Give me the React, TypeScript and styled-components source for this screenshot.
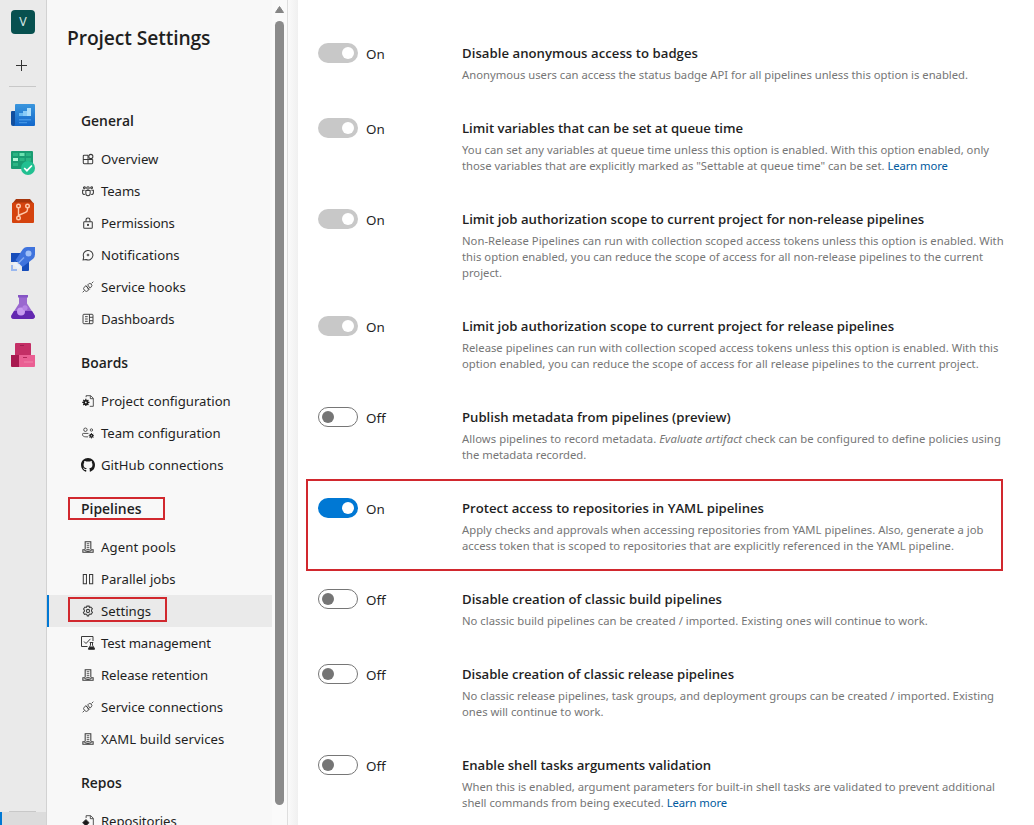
import React from 'react';
import styled, { createGlobalStyle, css } from 'styled-components';

const regular = '"Segoe UI", "Noto Sans", sans-serif';
const semibold = '"Segoe UI", "Open Sans", sans-serif';

const GlobalStyle = createGlobalStyle`
  *, *::before, *::after { box-sizing: border-box; }
  body { margin: 0; background: #fff; color: #1f1f1f; font-family: ${regular}; }
`;

const Page = styled.div`
  display: flex;
  height: 825px;
  overflow: hidden;
`;

/* ---------- product rail ---------- */

const Rail = styled.nav`
  flex: none;
  width: 47px;
  display: flex;
  flex-direction: column;
  background: #eaeaea;
  border-right: 1px solid #d2d2d2;
  padding-top: 10px;
`;

const Avatar = styled.div`
  width: 24px;
  height: 24px;
  margin-left: 11px;
  border-radius: 4px;
  background: #07504f;
  color: #d5e6e5;
  font-size: 12.5px;
  line-height: 24px;
  text-align: center;
`;

const AddButton = styled.div`
  height: 52px;
  padding: 26px 0 0 16px;
  line-height: 0;
`;

const Divider = styled.div`
  flex: none;
  width: 27px;
  height: 1px;
  margin-left: 9px;
  background: #c8c8c8;
`;

const Services = styled.div`
  flex: 1;
  display: flex;
  flex-direction: column;
  gap: 24px;
  padding: 16px 0 0 11px;

  svg { display: block; }
`;

const RailFooter = styled.div`
  flex: none;
  height: 13px;
  border-left: 2px solid #0078d4;
  background: #dcdcdc;
`;

/* ---------- settings navigation ---------- */

const Sidebar = styled.aside`
  flex: none;
  width: 225px;
  background: #f8f8f8;
  overflow: hidden;
`;

const SidebarTitle = styled.h1`
  margin: 0;
  height: 93px;
  padding: 24px 0 0 20px;
  font: 600 19.3px/28px ${semibold};
  letter-spacing: -0.12px;
`;

const GroupTitle = styled.h2`
  margin: 0;
  height: 50px;
  padding: 18px 0 0 34px;
  font: 600 13.9px/20px ${semibold};
`;

const Marked = styled.span<{ $w: number; $h: number; $x: number; $y: number }>`
  position: relative;

  &::after {
    content: '';
    position: absolute;
    left: ${p => p.$x}px;
    top: ${p => p.$y}px;
    width: ${p => p.$w}px;
    height: ${p => p.$h}px;
    border: 2px solid #d1282e;
  }
`;

const NavItem = styled.a<{ $active?: boolean }>`
  display: flex;
  align-items: center;
  gap: 6px;
  height: 32px;
  padding-left: 34px;
  font-size: 13.16px;
  line-height: 20px;
  white-space: nowrap;
  ${p => p.$active && css`
    background: #eaeaea;
    border-left: 2px solid #0078d4;
    padding-left: 32px;
  `}

  svg { flex: none; display: block; }
`;

const Label = styled.span<{ $track?: number }>`
  letter-spacing: ${p => p.$track ?? 0}px;
`;

const ScrollTrack = styled.div`
  flex: none;
  width: 15px;
  display: flex;
  flex-direction: column;
  align-items: center;
  background: #fafafa;
  padding: 6px 0 0 0;
`;

const ScrollThumb = styled.div`
  width: 9px;
  height: 784px;
  margin-top: 7px;
  border-radius: 5px;
  background: #8b8b8b;
`;

const Gutter = styled.div`
  flex: none;
  width: 11px;
  border-left: 1px solid #dedede;
  background: linear-gradient(to right, #fafafa, #f0f0f0);
`;

/* ---------- options ---------- */

const Content = styled.main`
  flex: 1;
  padding: 43px 0 0 20px;
`;

const Option = styled.section`
  position: relative;
  display: grid;
  grid-template-columns: 48px 96px 1fr;
  padding-bottom: 35px;
`;

const Highlight = styled.div`
  position: absolute;
  left: -12px;
  top: -19px;
  width: 697px;
  height: 92px;
  border: 2px solid #d1282e;
`;

type State = 'locked' | 'on' | 'off';

const Toggle = styled.div<{ $state: State }>`
  display: flex;
  align-items: center;
  justify-content: ${p => (p.$state === 'off' ? 'flex-start' : 'flex-end')};
  width: 40px;
  height: 20px;
  padding: 0 ${p => (p.$state === 'off' ? 3 : 4)}px;
  border-radius: 10px;
  border: ${p => (p.$state === 'off' ? '1px solid #767676' : 'none')};
  background: ${p => ({ locked: '#c8c8c8', on: '#0078d4', off: '#fff' })[p.$state]};

  &::before {
    content: '';
    width: 12px;
    height: 12px;
    border-radius: 50%;
    background: ${p => (p.$state === 'off' ? '#757575' : '#fff')};
  }
`;

const ToggleText = styled.span`
  font-size: 13.4px;
  line-height: 22px;
`;

const OptionTitle = styled.h3<{ $track: number }>`
  margin: 0 0 4px;
  font: 600 13.16px/20px ${semibold};
  letter-spacing: ${p => p.$track}px;
  white-space: nowrap;
`;

const Line = styled.div<{ $track: number }>`
  height: 16px;
  font-size: 11.28px;
  line-height: 16px;
  letter-spacing: ${p => p.$track}px;
  color: #767676;
  white-space: nowrap;
`;

const Link = styled.a`
  color: #005a9e;
  letter-spacing: -0.1px;
`;

/* ---------- drawings ---------- */

const BoardsIcon = () => (
  <svg width="24" height="24" viewBox="0 0 24 24">
    <defs>
      <linearGradient id="ov" x1="0" y1="0" x2="0" y2="1">
        <stop offset="0" stopColor="#3a96dd" />
        <stop offset="1" stopColor="#1267cb" />
      </linearGradient>
    </defs>
    <path d="M0 9a1 1 0 0 1 1-1h4v15H2a2 2 0 0 1-2-2z" fill="#114f9f" />
    <path d="M4 2a1 1 0 0 1 1-1h18a1 1 0 0 1 1 1v20a1 1 0 0 1-1 1H2a2 2 0 0 0 2-2z" fill="url(#ov)" />
    <path d="M8 10h4v3H8z" fill="#6cbcf3" />
    <path d="M12 8h4v5h-4z" fill="#8accf7" />
    <path d="M16 5h4v8h-4z" fill="#addef9" />
    <path d="M8 16h12v1.600H8zM8 19h8v1.200H8z" fill="#3f93e4" />
  </svg>
);

const WorkIcon = () => (
  <svg width="24" height="24" viewBox="0 0 24 24">
    <path d="M0 1a1 1 0 0 1 1-1h20a1 1 0 0 1 1 1v16a1 1 0 0 1-1 1H1a1 1 0 0 1-1-1z" fill="#1a9c72" />
    <path d="M2 2h5v3H2zM15 2h5v3h-5zM8.500 7h5v3h-5zM15 7h5v3h-5zM2 12h5v3H2z" fill="#2bb583" />
    <path d="M8.500 2h5v3h-5z" fill="#6be2b0" />
    <path d="M2 7h5v3H2z" fill="#b3f6d8" />
    <circle cx="17" cy="17" r="7" fill="#22c091" />
    <path d="M13.200 17l2.700 2.700 5-5.200" fill="none" stroke="#fff" strokeWidth="1.700" />
  </svg>
);

const ReposIcon = () => (
  <svg width="24" height="24" viewBox="0 0 24 24">
    <path d="M5 0h14l4 5H1z" fill="#a6350b" />
    <path d="M1 5a1.500 1.500 0 0 1 1.500-1.500h19A1.500 1.500 0 0 1 23 5v18a1 1 0 0 1-1 1H2a1 1 0 0 1-1-1z" fill="#d5430e" />
    <g fill="none" stroke="#ffc9ab" strokeWidth="1.400">
      <circle cx="7.500" cy="7" r="1.800" />
      <circle cx="16.500" cy="7" r="1.800" />
      <circle cx="7.500" cy="19" r="1.800" />
      <path d="M7.500 9v8M16.500 9v1.500c0 1.500-.7 2.200-2 2.800l-5 2.200c-1.400.6-2 1-2 2.200" />
    </g>
  </svg>
);

const RocketIcon = () => (
  <svg width="24" height="24" viewBox="0 0 24 24">
    <path d="M0 6h9l9 9v8a1 1 0 0 1-1 1h-6v-7l-4-4H0z" fill="#174dba" />
    <path d="M0 6h7v9H0z" fill="#174dba" />
    <path d="M16 0h8v7.500a6 6 0 0 1-1.800 4.200L11.500 20 4.500 13 12 2a6 6 0 0 1 4-2z" fill="#3f73dd" />
    <circle cx="17.500" cy="6.500" r="3" fill="#9fc0f8" />
    <path d="M7 16.500l6-6" stroke="#86abf2" strokeWidth="1.400" />
    <path d="M4 14.500l5.500 5.500-2.500 2-5-5z" fill="#e8f0fd" />
    <path d="M0 18h2v4h4v2H0z" fill="#9ab8ef" />
  </svg>
);

const FlaskIcon = () => (
  <svg width="24" height="24" viewBox="0 0 24 24">
    <path d="M8 1.500v7L.5 20C-.6 22 .5 24 3 24h18c2.500 0 3.600-2 2.500-4L16 8.500v-7z" fill="#9a68cf" />
    <path d="M3 16h18l2.700 4.500C24.500 22.500 23 24 21 24H3c-2 0-3.500-1.500-2.500-3.500z" fill="#6328b0" />
    <path d="M7 0h10v2.500H7z" fill="#8555c4" />
    <circle cx="10" cy="16.500" r="4" fill="#c79bf0" />
    <circle cx="14" cy="12.800" r="2.600" fill="#b583e4" />
  </svg>
);

const ArtifactsIcon = () => (
  <svg width="24" height="24" viewBox="0 0 24 24">
    <path d="M4 1a1 1 0 0 1 1-1h14a1 1 0 0 1 1 1v11H4z" fill="#c42f66" />
    <path d="M0 12h8v12H1a1 1 0 0 1-1-1z" fill="#a8194f" />
    <path d="M8 12h16v11a1 1 0 0 1-1 1H8z" fill="#ea5f93" />
    <path d="M9 2h4v1H9z" fill="#9d1f4f" />
    <path d="M12 14h4v1h-4z" fill="#b3285b" />
    <path d="M13 19h9" stroke="#f184ab" strokeWidth="1" />
  </svg>
);

const Stroke = styled.svg`
  fill: none;
  stroke: #3a3a3a;
  stroke-width: 1;
`;

const glyphs: Record<string, React.ReactNode> = {
  overview: (
    <>
      <path d="M7 2.500H2.500a1 1 0 0 0-1 1v8a1 1 0 0 0 1 1h9a1 1 0 0 0 1-1v-4M1.500 7.500h11M7 2.500v10" strokeWidth="1.200" />
      <circle cx="10.300" cy="4" r="2.400" strokeWidth="1.200" />
    </>
  ),
  teams: (
    <g strokeWidth="1.200">
      <circle cx="2.800" cy="3.300" r="1.100" />
      <circle cx="7" cy="3.500" r="1.500" />
      <circle cx="11.200" cy="3.300" r="1.100" />
      <path d="M4.500 6.500h5v3.500a2.500 2.500 0 0 1-5 0zM3 6H.7v3c0 1.300.8 2.100 2.600 2.100M11 6h2.300v3c0 1.300-.8 2.100-2.600 2.100" />
    </g>
  ),
  lock: (
    <g strokeWidth="1.200">
      <rect x="2" y="5.500" width="10" height="7.500" rx=".8" />
      <path d="M4.700 5.300V3.500a2.300 2.300 0 0 1 4.600 0v1.800" />
      <circle cx="7" cy="9.200" r=".6" fill="#333" />
    </g>
  ),
  bell: (
    <>
      <path d="M1.300 12.800l.7-3.300A5.600 5.600 0 1 1 4.700 12.300z" strokeWidth="1.200" />
      <circle cx="7" cy="7" r="1.100" fill="#555" stroke="#555" />
    </>
  ),
  plug: (
    <path d="M.8 13.200l2-2M11.200 2.800l2-2M5.700 6.300a1.500 1.500 0 0 0-2.200 0l-.9.9a2.400 2.400 0 0 0 0 3.300l.9.900a2.400 2.400 0 0 0 3.300 0l.9-.9zM6.600 4.500l.9-.9a2.400 2.400 0 0 1 3.300 0 2.400 2.400 0 0 1 0 3.300l-1.400 1.400zM4.500 5.500l4.500 4.500" />
  ),
  board: (
    <g strokeWidth="1.100">
      <rect x="1.200" y="1.500" width="11.600" height="11" rx="1" />
      <path d="M8.700 1.500v11M3.500 4.300h3.200M3.500 7h3.200M3.500 9.700h3.200M8.700 5h4M8.700 9h4" />
    </g>
  ),
  project: (
    <>
      <path d="M4.800 2.500V.8h5.400l3 3v9.400H9M9.700 1v3.300h3.300" />
      <path d="M4.500 4.500v8.400M.3 8.700h8.400M1.500 5.700l6 6M7.500 5.700l-6 6" strokeWidth="1.500" stroke="#1b1b1b" />
      <circle cx="4.500" cy="8.700" r="2" strokeWidth="2" stroke="#1b1b1b" fill="#f8f8f8" />
    </>
  ),
  team: (
    <>
      <circle cx="4" cy="3.200" r="2" />
      <circle cx="11" cy="3.500" r="1.400" />
      <path d="M7.500 7.500H1.500a1 1 0 0 0-1 1c0 1.900 1.500 3 4 3H7" />
      <path d="M11 7v6.400M7.800 10.200h6.400M8.800 8l4.400 4.400M13.200 8l-4.400 4.400" stroke="#222" />
      <circle cx="11" cy="10.200" r="1.500" strokeWidth="1.600" stroke="#222" fill="#f8f8f8" />
    </>
  ),
  server: (
    <>
      <path d="M3.700 9.800V.8h6.600v9M1 13V10.300h1.700c.5 1.200 1.500 1.600 4.300 1.600s3.800-.4 4.300-1.600H13V13z" strokeWidth="1.200" />
      <path d="M5.500 3.200h3M5.500 5.500h3M5.500 7.800h3M5 10h4" />
    </>
  ),
  parallel: <path d="M1.500 1.700h3.700v10.800H1.500zM8.800 1.700h3.700v10.800H8.800z" strokeWidth="1.200" />,
  gear: (
    <>
      <path d="M5.700 1.300h2.600l.4 1.600 1.600-.5 1.800 2-1 1.500.1 1.400 1 1.200-1.400 2.300-1.800-.3-.8.700-.5 1.500H6.200l-.6-1.500-1-.6-1.700.3L1.600 8.700l1.200-1.300V6.100l-1-1.400 1.600-2.300 1.700.5z" strokeWidth="1.200" />
      <circle cx="7" cy="7" r="1.900" strokeWidth="1.200" />
    </>
  ),
  repo: (
    <>
      <path d="M4.800 3.500V.8h5.400l3 3v9.400H9M9.700 1v3.300h3.300" />
      <path d="M4.500 5.200l3.800 3.800-3.800 3.800L.7 9z" fill="#1b1b1b" />
    </>
  ),
};

const GlyphBox = styled.span`
  flex: none;
  width: 14px;
  display: flex;
  justify-content: center;
`;

const Glyph = ({ name }: { name: string }) => {
  if (name === 'github') {
    return (
      <svg width="14" height="14" viewBox="0 0 16 16" fill="#1b1b1b">
        <path d="M8 0C3.580 0 0 3.580 0 8c0 3.540 2.290 6.530 5.470 7.590.4.070.55-.17.55-.38 0-.19-.01-.82-.01-1.490-2.010.37-2.530-.49-2.690-.94-.09-.23-.48-.94-.82-1.130-.28-.15-.68-.52-.01-.53.63-.01 1.080.58 1.230.82.72 1.210 1.870.87 2.330.66.07-.52.28-.87.51-1.070-1.780-.2-3.640-.89-3.640-3.950 0-.87.31-1.590.82-2.150-.08-.2-.36-1.020.08-2.120 0 0 .67-.21 2.200.82.64-.18 1.320-.27 2-.27s1.360.09 2 .27c1.530-1.040 2.200-.82 2.200-.82.44 1.100.16 1.920.08 2.120.51.56.82 1.270.82 2.150 0 3.070-1.870 3.750-3.650 3.950.29.25.54.73.54 1.480 0 1.070-.01 1.930-.01 2.200 0 .21.15.46.55.38A8.010 8.010 0 0 0 16 8c0-4.420-3.580-8-8-8z" />
      </svg>
    );
  }
  if (name === 'test') {
    return (
      <Stroke width="14" height="14" viewBox="0 0 14 14">
        <path d="M6.500 10.500H.5V.5h11.500V5M3 5.500l2 2 4.500-4.700" />
        <path d="M8.700 6.500h3.600M9.500 6.500v2.700l-2 3.800h6l-2-3.800V6.500" />
        <path d="M8.500 11h4l1 2.200h-6z" fill="#1b1b1b" />
      </Stroke>
    );
  }
  return (
    <GlyphBox>
      <Stroke width="12" height="12" viewBox="0 0 14 14">{glyphs[name]}</Stroke>
    </GlyphBox>
  );
};

/* ---------- data ---------- */

const groups: { title: string; items: [string, string, number][] }[] = [
  {
    title: 'General',
    items: [
      ['overview', 'Overview', 0],
      ['teams', 'Teams', -0.1],
      ['lock', 'Permissions', -0.1],
      ['bell', 'Notifications', 0.03],
      ['plug', 'Service hooks', 0.02],
      ['board', 'Dashboards', -0.1],
    ],
  },
  {
    title: 'Boards',
    items: [
      ['project', 'Project configuration', 0],
      ['team', 'Team configuration', -0.04],
      ['github', 'GitHub connections', 0.03],
    ],
  },
  {
    title: 'Pipelines',
    items: [
      ['server', 'Agent pools', 0.1],
      ['parallel', 'Parallel jobs', 0],
      ['gear', 'Settings', 0],
      ['test', 'Test management', -0.12],
      ['server', 'Release retention', -0.06],
      ['plug', 'Service connections', 0],
      ['server', 'XAML build services', 0.07],
    ],
  },
  { title: 'Repos', items: [['repo', 'Repositories', -0.08]] },
];

type OptionData = {
  state: State;
  title: string;
  track: number;
  lines: [React.ReactNode, number][];
  marked?: boolean;
};

const options: OptionData[] = [
  {
    state: 'locked',
    title: 'Disable anonymous access to badges',
    track: 0.034,
    lines: [['Anonymous users can access the status badge API for all pipelines unless this option is enabled.', -0.01]],
  },
  {
    state: 'locked',
    title: 'Limit variables that can be set at queue time',
    track: -0.04,
    lines: [
      ['You can set any variables at queue time unless this option is enabled. With this option enabled, only', 0.005],
      [<>those variables that are explicitly marked as "Settable at queue time" can be set. <Link>Learn more</Link></>, -0.005],
    ],
  },
  {
    state: 'locked',
    title: 'Limit job authorization scope to current project for non-release pipelines',
    track: 0,
    lines: [
      ['Non-Release Pipelines can run with collection scoped access tokens unless this option is enabled. With', 0.018],
      ['this option enabled, you can reduce the scope of access for all non-release pipelines to the current', 0.02],
      ['project.', 0],
    ],
  },
  {
    state: 'locked',
    title: 'Limit job authorization scope to current project for release pipelines',
    track: -0.016,
    lines: [
      ['Release pipelines can run with collection scoped access tokens unless this option is enabled. With this', 0.002],
      ['option enabled, you can reduce the scope of access for all release pipelines to the current project.', 0.014],
    ],
  },
  {
    state: 'off',
    title: 'Publish metadata from pipelines (preview)',
    track: -0.01,
    lines: [
      [<>Allows pipelines to record metadata. <em>Evaluate artifact</em> check can be configured to define policies using</>, 0.053],
      ['the metadata recorded.', -0.03],
    ],
  },
  {
    state: 'on',
    title: 'Protect access to repositories in YAML pipelines',
    track: -0.007,
    marked: true,
    lines: [
      ['Apply checks and approvals when accessing repositories from YAML pipelines. Also, generate a job', 0.018],
      ['access token that is scoped to repositories that are explicitly referenced in the YAML pipeline.', 0.018],
    ],
  },
  {
    state: 'off',
    title: 'Disable creation of classic build pipelines',
    track: 0.01,
    lines: [['No classic build pipelines can be created / imported. Existing ones will continue to work.', 0.022]],
  },
  {
    state: 'off',
    title: 'Disable creation of classic release pipelines',
    track: -0.036,
    lines: [
      ['No classic release pipelines, task groups, and deployment groups can be created / imported. Existing', 0.002],
      ['ones will continue to work.', 0],
    ],
  },
  {
    state: 'off',
    title: 'Enable shell tasks arguments validation',
    track: -0.062,
    lines: [
      ['When this is enabled, argument parameters for built-in shell tasks are validated to prevent additional', -0.006],
      [<>shell commands from being executed. <Link>Learn more</Link></>, 0],
    ],
  },
];

export default function App() {
  return (
    <Page>
      <GlobalStyle />
      <Rail>
        <Avatar>V</Avatar>
        <AddButton>
          <svg width="11" height="11" viewBox="0 0 11 11">
            <path d="M5.500 0v11M0 5.500h11" stroke="#333" strokeWidth="1" />
          </svg>
        </AddButton>
        <Divider />
        <Services>
          <BoardsIcon />
          <WorkIcon />
          <ReposIcon />
          <RocketIcon />
          <FlaskIcon />
          <ArtifactsIcon />
        </Services>
        <Divider />
        <RailFooter />
      </Rail>
      <Sidebar>
        <SidebarTitle>Project Settings</SidebarTitle>
        {groups.map(g => (
          <React.Fragment key={g.title}>
            <GroupTitle>
              {g.title === 'Pipelines' ? (
                <Marked $x={-13} $y={-2} $w={97} $h={23}>{g.title}</Marked>
              ) : (
                g.title
              )}
            </GroupTitle>
            {g.items.map(([icon, text, track]) => (
              <NavItem key={text} $active={text === 'Settings'}>
                <Glyph name={icon} />
                {text === 'Settings' ? (
                  <Marked $x={-33} $y={-4} $w={99} $h={25}>{text}</Marked>
                ) : (
                  <Label $track={track}>{text}</Label>
                )}
              </NavItem>
            ))}
          </React.Fragment>
        ))}
      </Sidebar>
      <ScrollTrack>
        <svg width="9" height="8" viewBox="0 0 9 8">
          <path d="M4.500.5L8.500 6.500H.5z" fill="#858585" stroke="#858585" strokeLinejoin="round" />
        </svg>
        <ScrollThumb />
      </ScrollTrack>
      <Gutter />
      <Content>
        {options.map(o => (
          <Option key={o.title}>
            <Toggle $state={o.state} />
            <ToggleText>{o.state === 'off' ? 'Off' : 'On'}</ToggleText>
            <div>
              <OptionTitle $track={o.track}>{o.title}</OptionTitle>
              {o.lines.map(([text, track], i) => (
                <Line key={i} $track={track}>{text}</Line>
              ))}
            </div>
            {o.marked && <Highlight />}
          </Option>
        ))}
      </Content>
    </Page>
  );
}
